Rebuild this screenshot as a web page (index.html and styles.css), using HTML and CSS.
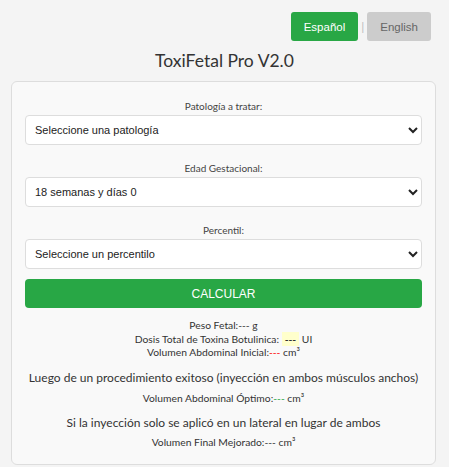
FILE: index.html
```html
<!DOCTYPE html>
<html lang="es">
<head>
    <meta charset="UTF-8">
    <meta name="viewport" content="width=device-width, initial-scale=1.0">
    <title>ToxiFetal Pro V2.0</title>
    <link rel="stylesheet" href="styles.css">
</head>
<body>
    <div class="lang-bar">
        <button class="lang-btn active">Español</button>
        <span class="lang-sep">|</span>
        <button class="lang-btn">English</button>
    </div>
    <h1>ToxiFetal Pro V2.0</h1>
    <div class="card">
        <div class="field">
            <label for="patologia">Patología a tratar:</label>
            <select id="patologia">
                <option>Seleccione una patología</option>
            </select>
        </div>
        <div class="field">
            <label for="edad">Edad Gestacional:</label>
            <select id="edad">
                <option>18 semanas y días 0</option>
            </select>
        </div>
        <div class="field field-last">
            <label for="percentil">Percentil:</label>
            <select id="percentil">
                <option>Seleccione un percentilo</option>
            </select>
        </div>
        <button class="calc-btn">CALCULAR</button>
        <div class="results">
            <div class="line">Peso Fetal:--- g</div>
            <div class="line">Dosis Total de Toxina Botulinica: <span class="dose">---</span> UI</div>
            <div class="line">Volumen Abdominal Inicial:<span class="red">---</span> cm³</div>
        </div>
        <p class="note">Luego de un procedimiento exitoso (inyección en ambos músculos anchos)</p>
        <div class="line">Volumen Abdominal Óptimo:<span class="green">---</span> cm³</div>
        <p class="note note-second">Si la inyección solo se aplicó en un lateral en lugar de ambos</p>
        <div class="line">Volumen Final Mejorado:--- cm³</div>
    </div>
</body>
</html>
```

FILE: styles.css
```css
body {
    margin: 0;
    padding: 0;
    background-color: #f4f4f4;
    font-family: Lato, "Open Sans", sans-serif;
    color: #333;
}
.lang-bar {
    display: flex;
    justify-content: flex-end;
    align-items: center;
    padding: 12px 18px 0 0;
}
.lang-btn {
    height: 29px;
    padding: 0 13px;
    border: none;
    border-radius: 3px;
    background-color: #cccccc;
    color: #666;
    font-family: "Liberation Sans", Arial, sans-serif;
    font-size: 11.5px;
}
.lang-btn.active {
    background-color: #28a745;
    color: #fff;
}
.lang-sep {
    margin: 0 3px;
    color: #bbb;
    font-size: 12px;
}
h1 {
    margin: 8px 0 8px;
    text-align: center;
    font-size: 17.5px;
    font-weight: normal;
    line-height: 24px;
    color: #333;
}
.card {
    margin: 0 13px 0 11px;
    padding: 17px 13px 14px;
    background-color: #f9f9f9;
    border: 1px solid #dddddd;
    border-radius: 6px;
    text-align: center;
}
.field {
    margin-bottom: 16px;
}
.field-last {
    margin-bottom: 10px;
}
.field label {
    display: block;
    margin-bottom: 2px;
    font-size: 10px;
    line-height: 14px;
    color: #444;
}
.field select {
    display: block;
    width: 100%;
    height: 30px;
    padding: 0 5px;
    background-color: #fff;
    border: 1px solid #dddddd;
    border-radius: 4px;
    font-family: "Liberation Sans", Arial, sans-serif;
    font-size: 11px;
    color: #222;
}
.calc-btn {
    display: block;
    width: 100%;
    height: 29px;
    border: none;
    border-radius: 4px;
    background-color: #28a745;
    color: #fff;
    font-family: "Liberation Sans", Arial, sans-serif;
    font-size: 12px;
}
.results {
    margin-top: 11px;
}
.line {
    font-size: 10.3px;
    line-height: 13.5px;
    color: #333;
}
.dose {
    padding: 1px 3px;
    background-color: #ffffcc;
    font-weight: bold;
}
.red {
    color: #ff0000;
}
.green {
    color: #28a745;
}
.note {
    margin: 10px 0 6px;
    font-size: 12px;
    line-height: 16px;
    color: #333;
}
.note-second {
    margin-top: 10px;
    margin-bottom: 5px;
}
```
